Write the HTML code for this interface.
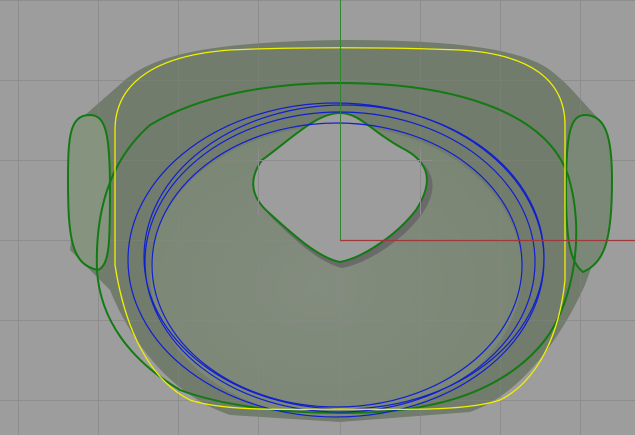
<!DOCTYPE html>
<html><head><style>html,body{margin:0;padding:0;background:#9d9d9d;overflow:hidden}svg{display:block}</style></head>
<body>
<svg width="635" height="435" viewBox="0 0 635 435" xmlns="http://www.w3.org/2000/svg">
<rect width="635" height="435" fill="#9d9d9d"/>
<defs>
<g id="grid" stroke="#8d8d8d" stroke-width="1">
<line x1="18.5" y1="0" x2="18.5" y2="435"/><line x1="98.5" y1="0" x2="98.5" y2="435"/><line x1="178.5" y1="0" x2="178.5" y2="435"/><line x1="258.5" y1="0" x2="258.5" y2="435"/><line x1="340.5" y1="0" x2="340.5" y2="435"/><line x1="420.5" y1="0" x2="420.5" y2="435"/><line x1="500.5" y1="0" x2="500.5" y2="435"/><line x1="580.5" y1="0" x2="580.5" y2="435"/>
<line x1="0" y1="0.5" x2="635" y2="0.5"/><line x1="0" y1="80.5" x2="635" y2="80.5"/><line x1="0" y1="160.5" x2="635" y2="160.5"/><line x1="0" y1="240.5" x2="635" y2="240.5"/><line x1="0" y1="320.5" x2="635" y2="320.5"/><line x1="0" y1="400.5" x2="635" y2="400.5"/>
</g>
<radialGradient id="lg" cx="0.45" cy="0.55" r="0.6"><stop offset="0" stop-color="#838c7e"/><stop offset="1" stop-color="#7a8674"/></radialGradient>
</defs>
<use href="#grid"/>
<!-- outer body -->
<path d="M125 80 C160 50 230 42 340 40 C450 40 520 48 550 70 C570 85 580 100 600 120 L605 230 L585 285 C560 340 520 395 470 412 L340 422 L230 415 C170 395 130 340 110 290 L70 250 L85 115 Z" fill="#717c6c"/>
<!-- lighter inner -->
<ellipse cx="336" cy="272" rx="186" ry="146" fill="url(#lg)"/>
<use href="#grid" opacity="0.25"/>
<!-- side pills -->
<path d="M90 115 C70 115 68 135 68 180 C68 240 72 265 98 270 C110 265 110 240 110 190 C110 135 106 115 90 115Z" fill="#86937f" stroke="#137a13" stroke-width="2"/>
<path d="M585 115 C605 115 612 135 612 180 C612 240 605 262 583 272 C570 262 566 240 566 190 C566 135 570 115 585 115Z" fill="#7c8877" stroke="#137a13" stroke-width="2"/>
<!-- hole shadow -->
<path d="M343 118 C365 118 380 135 405 150 C432 165 442 185 422 214 C402 242 365 264 342 268 C318 262 295 240 272 218 C255 200 250 180 262 162 C290 140 315 118 343 118Z" fill="#6a6a6a"/>
<path d="M340 113 C360 113 372 132 402 148 C430 162 434 182 416 210 C396 236 362 258 340 262 C318 258 290 232 268 212 C250 196 249 178 262 160 C290 140 316 113 340 113Z" fill="#9d9d9d" stroke="#137a13" stroke-width="2"/>
<line x1="258.5" y1="150" x2="258.5" y2="215" stroke="#8d8d8d"/><line x1="420.5" y1="150" x2="420.5" y2="215" stroke="#8d8d8d"/><line x1="255" y1="160.5" x2="432" y2="160.5" stroke="#8d8d8d"/>
<!-- green big outline -->
<path d="M340 83 C450 83 545 110 568 175 C585 230 575 300 545 340 C520 372 480 395 430 405 C400 412 360 413 340 413 C280 413 220 405 180 390 C130 360 100 320 97 270 C95 210 110 160 150 125 C200 95 270 83 340 83Z" fill="none" stroke="#137a13" stroke-width="2"/>
<!-- blue -->
<g fill="none" stroke="#1020d0" stroke-width="1.2">
<ellipse cx="336" cy="260" rx="208" ry="157"/>
<ellipse cx="340" cy="262" rx="195" ry="150"/>
<ellipse cx="344" cy="257" rx="200" ry="152"/>
<ellipse cx="337" cy="265" rx="185" ry="142"/>
</g>
<!-- yellow -->
<path d="M115 265 L115 130 C115 80 160 55 230 50 C290 47 390 47 460 50 C530 54 565 80 565 125 L565 280 C560 330 540 380 500 400 C470 410 420 410 340 409 C270 410 220 410 190 400 C150 380 125 330 115 265Z" fill="none" stroke="#f0f000" stroke-width="1.3"/>
<!-- axes -->
<line x1="340.5" y1="0" x2="340.5" y2="240" stroke="#2c8a2c" stroke-width="1"/>
<line x1="340" y1="240.5" x2="635" y2="240.5" stroke="#a03a3a" stroke-width="1.2"/>
</svg>
</body></html>
